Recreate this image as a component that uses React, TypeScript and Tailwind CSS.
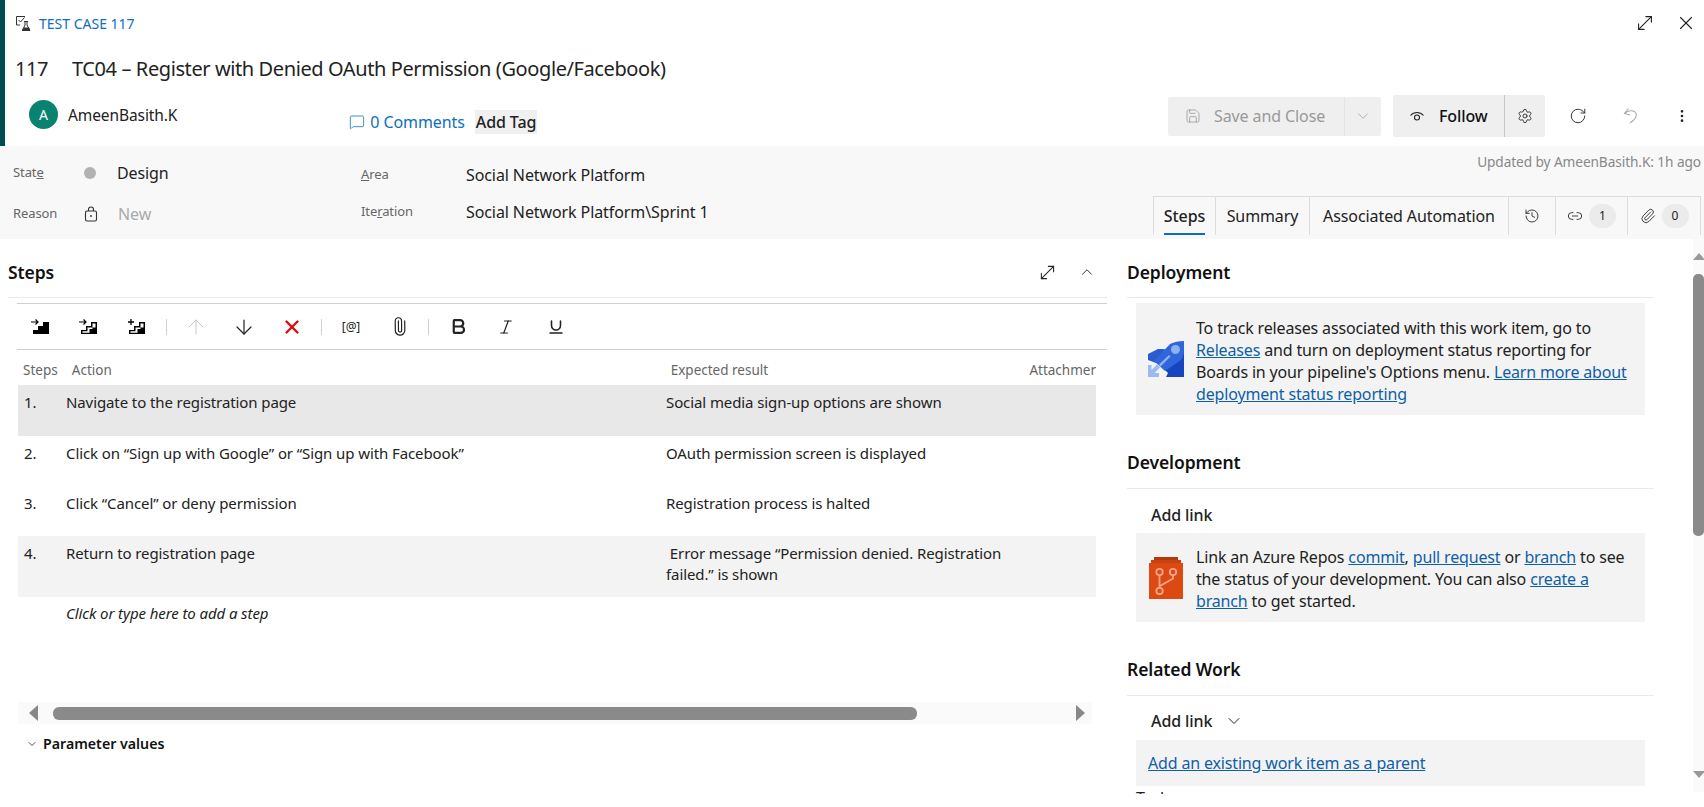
import {
  ArrowDown,
  ArrowUp,
  Bold,
  ChevronDown,
  ChevronUp,
  History,
  Italic,
  Link2,
  MessageSquare,
  MoreVertical,
  MoveDiagonal,
  Paperclip,
  RotateCw,
  Save,
  Settings,
  Underline,
  X,
} from "lucide-react";

const Stairs = ({ mode }: { mode: "solid" | "outline" | "plus" }) => (
  <svg width="20" height="18" viewBox="0 0 20 18">
    {mode === "plus" ? (
      <path d="M1 4h6M4 1v6" stroke="#000" strokeWidth="1.3" fill="none" />
    ) : (
      <path d="M0 4h7M4.500 1.500 7 4 4.500 6.500" stroke="#000" strokeWidth="1.2" fill="none" />
    )}
    {mode === "solid" ? (
      <path d="M2 16v-4h5V8h5V4h6v12z" fill="#000" />
    ) : (
      <>
        <path d="M2 16v-4h5V8h5V4h6v12z" fill="#000" />
        <path d="M3.500 14.800v-1.500h5V9.500h5V5.500h3v4h-3v1.500h-3v3.800z" fill="#fff" />
      </>
    )}
  </svg>
);

const Rocket = () => (
  <svg width="36" height="36" viewBox="0 0 36 36">
    <path d="M0 13 10 8h7L8 22 0 19z" fill="#2a5bd0" />
    <path d="M16 20 36 8v28H18l2-4-8-8z" fill="#1546bd" />
    <path d="M6 20 22 3c4-2 9-3 14-3v10c0 3-1 6-3 9L17 30z" fill="#2f66db" />
    <circle cx="27.500" cy="8.500" r="4.500" fill="#8fb0f3" />
    <path d="M11 23.500 21 14l1.500 1.500-10 10z" fill="#8fb0f3" />
    <path d="M0 36V24h3.500v5L9 23.500l3 3L6.500 32H11v4z" fill="#9cb8f5" />
  </svg>
);

const Repos = () => (
  <svg width="34" height="42" viewBox="0 0 34 42">
    <path d="M5 0h24v4H5z" fill="#b13a0c" />
    <path d="M2 3h30v4H2z" fill="#c8440f" />
    <path d="M0 6h34v36H0z" fill="#dc4a12" />
    <g fill="none" stroke="#f7a58a" strokeWidth="1.800">
      <circle cx="10.500" cy="15" r="3.200" />
      <circle cx="24" cy="15" r="3.200" />
      <circle cx="10.500" cy="34" r="3.200" />
      <path d="M10.500 18.500v12M24 18.500v3L11 29" />
    </g>
  </svg>
);

const CaseIcon = () => (
  <svg width="17" height="17" viewBox="0 0 17 17" fill="none" stroke="#333" strokeWidth="1">
    <path d="M10 1.500H1.500v8.500H5" />
    <path d="m3.500 5 2 2L9.500 2.500" />
    <path d="M9 6.500h4M10 6.500v3.500l-2.500 5.500h7.500L12 10V6.500" />
    <path d="M8.500 13h5.500v2.500H7.500z" fill="#333" />
  </svg>
);

const FollowEye = () => (
  <svg width="16" height="16" viewBox="0 0 16 16" fill="none" stroke="#222" strokeWidth="1.100">
    <path d="M1.500 7.500C5 3.500 11 3.500 14.500 7.500" />
    <circle cx="8" cy="9.500" r="2.500" />
  </svg>
);

const LockIcon = () => (
  <svg width="14" height="16" viewBox="0 0 14 16" fill="none" stroke="#333" strokeWidth="1.100">
    <rect x="1.500" y="5" width="11" height="10" rx="1.500" />
    <path d="M4.500 5V3.500a2.500 2.500 0 0 1 5 0V5" />
    <circle cx="7" cy="10" r="0.900" fill="#333" stroke="none" />
  </svg>
);

const UndoIcon = () => (
  <svg width="18" height="18" viewBox="0 0 18 18" fill="none" stroke="#aaa" strokeWidth="1.100" className="ml-[35px]">
    <path d="M6.500 1.500 2.500 6.500 8 8" />
    <path d="M2.500 6.500C6 3 12 3 14 6c1.500 3-1 6.500-6 10" />
  </svg>
);

const ToolSep = () => <div className="mx-[5px] h-4 w-px bg-[#d0d0d0]" />;

const ToolBtn = ({ children }: { children: React.ReactNode }) => (
  <div className="flex w-[48px] items-center justify-center">{children}</div>
);

const Field = ({ label, children }: { label: React.ReactNode; children: React.ReactNode }) => (
  <div className="flex items-center">
    <div className="w-[105px] text-[13px] text-[#666]">{label}</div>
    <div className="text-[16px] text-[#222]">{children}</div>
  </div>
);

const steps = [
  { n: "1.", action: "Navigate to the registration page", result: ["Social media sign-up options are shown"], bg: "bg-[#e8e8e8]", h: "h-[51px] pt-[7px]" },
  { n: "2.", action: "Click on “Sign up with Google” or “Sign up with Facebook”", result: ["OAuth permission screen is displayed"], bg: "", h: "h-[50px] pt-[7px]" },
  { n: "3.", action: "Click “Cancel” or deny permission", result: ["Registration process is halted"], bg: "", h: "h-[50px] pt-[7px]" },
  { n: "4.", action: "Return to registration page", result: [" Error message “Permission denied. Registration", "failed.” is shown"], bg: "bg-[#f3f3f3]", h: "h-[61px] pt-[7px]" },
];

const A = ({ children }: { children: React.ReactNode }) => (
  <a className="text-[#0f5fa8] underline">{children}</a>
);

const SectionTitle = ({ children }: { children: React.ReactNode }) => (
  <div className="border-b border-[#eaeaea] pb-[15px] text-[17.500px] leading-[22px] font-semibold text-[#111]">{children}</div>
);

export default function App() {
  return (
    <div className="flex h-[807px] w-[1704px] flex-col overflow-hidden bg-white font-['Noto_Sans',sans-serif] tracking-[-0.006em] text-[#222]">
      {/* header */}
      <div className="h-[146px] border-l-[5px] border-[#004b50] pl-[10px]">
        <div className="flex h-[46px] items-center">
          <CaseIcon />
          <span className="ml-[7px] text-[14px] tracking-normal text-[#106ebe]">TEST CASE 117</span>
          <div className="ml-auto flex items-center gap-[19px] pr-[7px]">
            <MoveDiagonal size={22} strokeWidth={1.2} />
            <X size={22} strokeWidth={1.2} />
          </div>
        </div>
        <div className="flex h-[46px] items-center text-[20px] tracking-[-0.02em]">
          <span className="w-[57px]">117</span>
          <span>TC04 – Register with Denied OAuth Permission (Google/Facebook)</span>
        </div>
        <div className="flex h-[54px] items-start">
          <div className="mt-[8px] ml-[14px] flex h-[29px] w-[29px] items-center justify-center rounded-full bg-[#0a8270] text-[14px] text-white">A</div>
          <span className="ml-[10px] pt-[11px] text-[15.500px] leading-[24px]">AmeenBasith.K</span>
          <div className="ml-[172px] flex items-center pt-[18px] text-[#106ebe]">
            <MessageSquare size={16} strokeWidth={1.2} />
            <span className="ml-[5px] text-[16px] leading-[24px]">0 Comments</span>
            <span className="ml-[10px] bg-[#f0f0f0] px-[1px] text-[16px] leading-[24px] font-medium text-[#222]">Add Tag</span>
          </div>
          <div className="ml-auto flex items-center pt-[3px] pr-[14px]">
            <div className="flex h-[39px] w-[213px] items-center rounded-[2px] bg-[#efefef] text-[#999]">
              <Save size={16} strokeWidth={1.2} className="ml-[17px]" />
              <span className="ml-[13px] text-[16px]">Save and Close</span>
              <div className="ml-auto flex h-full w-[37px] items-center justify-center border-l border-[#e3e3e3]">
                <ChevronDown size={18} strokeWidth={1} />
              </div>
            </div>
            <div className="ml-[12px] flex h-[42px] w-[152px] items-center rounded-[2px] bg-[#efefef]">
              <div className="ml-[16px]"><FollowEye /></div>
              <span className="ml-[14px] text-[16px] font-medium text-[#111]">Follow</span>
              <div className="ml-auto flex h-full w-[41px] items-center justify-center border-l border-[#c8c8c8]">
                <Settings size={16} strokeWidth={1.3} />
              </div>
            </div>
            <RotateCw size={18} strokeWidth={1.2} className="ml-[24px]" />
            <UndoIcon />
            <MoreVertical size={16} className="ml-[34px]" />
          </div>
        </div>
      </div>

      {/* fields band */}
      <div className="relative flex h-[93px] bg-[#f8f8f8]">
        <div className="flex w-[361px] flex-col gap-[17px] pt-[15px] pl-[13px]">
          <div className="flex items-center">
            <span className="w-[71px] text-[13px] text-[#666]">Stat<u>e</u></span>
            <span className="h-[12px] w-[12px] rounded-full bg-[#b2b2b2]" />
            <span className="ml-[21px] text-[16px]">Design</span>
          </div>
          <div className="flex items-center">
            <span className="w-[71px] text-[13px] text-[#666]">Reason</span>
            <LockIcon />
            <span className="ml-[20px] text-[16px] text-[#aaa]">New</span>
          </div>
        </div>
        <div className="flex flex-col gap-[13px] pt-[17px]">
          <Field label={<><u>A</u>rea</>}>Social Network Platform</Field>
          <Field label={<>Ite<u>r</u>ation</>}>Social Network Platform\Sprint 1</Field>
        </div>
        <div className="ml-auto flex flex-col items-end pr-[3px]">
          <div className="pt-[7px] pb-[26px] text-[13.700px] leading-[17px] text-[#888]">Updated by AmeenBasith.K: 1h ago</div>
          <div className="flex h-[39px] items-stretch border-x border-t border-[#dcdcdc] text-[16px]">
            <div className="relative flex w-[62px] items-center justify-center border-r border-[#dcdcdc] font-medium">
              Steps
              <div className="absolute right-[10px] bottom-0 left-[10px] h-[2px] bg-[#0f6cbd]" />
            </div>
            <div className="flex w-[94px] items-center justify-center border-r border-[#dcdcdc]">Summary</div>
            <div className="flex w-[199px] items-center justify-center border-r border-[#dcdcdc]">Associated Automation</div>
            <div className="flex w-[47px] items-center justify-center border-r border-[#dcdcdc]">
              <History size={16} strokeWidth={1.3} />
            </div>
            <div className="flex w-[72px] items-center justify-center gap-[6px] border-r border-[#dcdcdc]">
              <Link2 size={16} strokeWidth={1.3} />
              <span className="flex h-[24px] w-[27px] items-center justify-center rounded-full bg-[#ebebeb] text-[12px]">1</span>
            </div>
            <div className="flex w-[72px] items-center justify-center gap-[6px]">
              <Paperclip size={16} strokeWidth={1.3} />
              <span className="flex h-[24px] w-[27px] items-center justify-center rounded-full bg-[#ebebeb] text-[12px]">0</span>
            </div>
          </div>
        </div>
      </div>

      {/* body */}
      <div className="flex h-[568px]">
        {/* left column */}
        <div className="w-[1119px] pt-[22px] pr-[12px] pl-[8px]">
          <div className="flex items-center justify-between border-b border-[#eaeaea] pb-[14px]">
            <span className="text-[17.500px] leading-[22px] font-semibold text-[#111]">Steps</span>
            <div className="flex items-center gap-[20px] pr-[11px]">
              <MoveDiagonal size={21} strokeWidth={1.2} />
              <ChevronUp size={18} strokeWidth={1.2} />
            </div>
          </div>
          <div className="mt-[5px] ml-[9px] flex h-[47px] items-center border-y border-[#cfcfcf]">
            <ToolBtn><Stairs mode="solid" /></ToolBtn>
            <ToolBtn><Stairs mode="outline" /></ToolBtn>
            <ToolBtn><Stairs mode="plus" /></ToolBtn>
            <ToolSep />
            <ToolBtn><ArrowUp size={24} strokeWidth={1} className="text-[#c8c8c8]" /></ToolBtn>
            <ToolBtn><ArrowDown size={24} strokeWidth={1.2} /></ToolBtn>
            <ToolBtn><X size={22} strokeWidth={2.6} className="text-[#e00b0b]" /></ToolBtn>
            <ToolSep />
            <ToolBtn><span className="text-[12px] text-[#222]">[@]</span></ToolBtn>
            <ToolBtn><Paperclip size={19} strokeWidth={1.5} className="-rotate-45" /></ToolBtn>
            <ToolSep />
            <ToolBtn><Bold size={19} strokeWidth={2.8} /></ToolBtn>
            <ToolBtn><Italic size={18} strokeWidth={1.6} /></ToolBtn>
            <div className="flex w-[52px] items-center justify-center"><Underline size={18} strokeWidth={2.1} /></div>
          </div>
          <div className="ml-[10px] w-[1078px]">
            <div className="flex h-[35px] items-center overflow-hidden pt-[5px] text-[13.500px] tracking-normal whitespace-nowrap text-[#666]">
              <span className="ml-[5px] w-[49px]">Steps</span>
              <span className="w-[601px]">Action</span>
              <span className="w-[360px]">Expected result</span>
              <span>Attachmer</span>
            </div>
            {steps.map((s) => (
              <div key={s.n} className={`flex text-[15px] leading-[21px] ${s.bg} ${s.h}`}>
                <span className="ml-[6px] w-[42px]">{s.n}</span>
                <span className="w-[600px]">{s.action}</span>
                <div className="whitespace-pre">
                  {s.result.map((r) => (
                    <div key={r}>{r}</div>
                  ))}
                </div>
              </div>
            ))}
            <div className="pt-[6px] pl-[48px] text-[15px] leading-[21px] text-[#222] italic">Click or type here to add a step</div>
            <div className="mt-[78px] flex h-[22px] w-[1074px] items-center bg-[#fafafa] pl-[11px]">
              <div className="h-0 w-0 border-y-[8px] border-r-[9px] border-y-transparent border-r-[#888]" />
              <div className="ml-[15px] h-[13px] w-[864px] rounded-[6px] bg-[#8a8a8a]" />
              <div className="mr-[7px] ml-auto h-0 w-0 border-y-[8px] border-l-[9px] border-y-transparent border-l-[#888]" />
            </div>
            <div className="mt-[10px] flex items-center pl-[8px] text-[14.200px] leading-[20px] font-semibold tracking-normal text-[#111]">
              <ChevronDown size={12} strokeWidth={1.5} />
              <span className="ml-[5px]">Parameter values</span>
            </div>
          </div>
        </div>

        {/* right column */}
        <div className="h-[555px] flex-1 overflow-hidden pt-[22px] pr-[39px] pl-[8px]">
          <div className="border-b border-[#eaeaea] pb-[14px] text-[17.500px] leading-[22px] font-semibold text-[#111]">Deployment</div>
          <div className="mx-[9px] mt-[5px] flex h-[112px] items-center bg-[#f3f3f3] pl-[12px] text-[16px] leading-[22px] tracking-[-0.01em]">
            <Rocket />
            <div className="ml-[12px] pt-[4px]">
              To track releases associated with this work item, go to
              <br />
              <A>Releases</A> and turn on deployment status reporting for
              <br />
              Boards in your pipeline's Options menu. <A>Learn more about</A>
              <br />
              <A>deployment status reporting</A>
            </div>
          </div>
          <div className="mt-[36px]">
            <SectionTitle>Development</SectionTitle>
          </div>
          <div className="flex h-[44px] items-center pt-[8px] pl-[24px] text-[16px] font-medium">Add link</div>
          <div className="mx-[9px] flex h-[89px] items-center bg-[#f3f3f3] pl-[13px] text-[16px] leading-[22px] tracking-[-0.01em]">
            <Repos />
            <div className="ml-[13px] pt-[2px]">
              Link an Azure Repos <A>commit</A>, <A>pull request</A> or <A>branch</A> to see
              <br />
              the status of your development. You can also <A>create a</A>
              <br />
              <A>branch</A> to get started.
            </div>
          </div>
          <div className="mt-[36px]">
            <SectionTitle>Related Work</SectionTitle>
          </div>
          <div className="flex h-[44px] items-center pt-[6px] pl-[24px] text-[16px] font-medium">
            Add link
            <ChevronDown size={20} strokeWidth={1.2} className="ml-[12px]" />
          </div>
          <div className="mx-[9px] flex h-[46px] items-center bg-[#f3f3f3] pl-[12px] text-[16px] tracking-[-0.01em]">
            <A>Add an existing work item as a parent</A>
          </div>
          <div className="ml-[9px] pt-[2px] text-[16px] leading-[20px]">Tasks</div>
        </div>

        {/* page scrollbar */}
        <div className="flex h-[553px] w-[11px] flex-col items-center bg-[#fafafa] pt-[14px]">
          <div className="h-0 w-0 border-x-[6px] border-b-[7px] border-x-transparent border-b-[#999]" />
          <div className="mt-[14px] h-[262px] w-[11px] rounded-[5px] bg-[#8a8a8a]" />
          <div className="mt-auto mb-[14px] h-0 w-0 border-x-[6px] border-t-[7px] border-x-transparent border-t-[#999]" />
        </div>
      </div>
    </div>
  );
}
